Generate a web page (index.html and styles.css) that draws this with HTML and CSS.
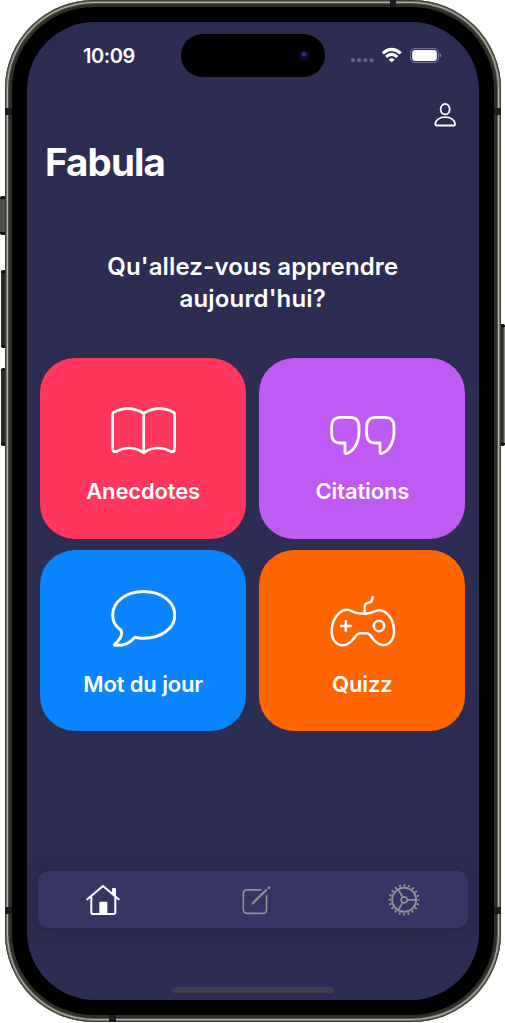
FILE: index.html
```html
<!DOCTYPE html>
<html lang="fr">
<head>
<meta charset="utf-8">
<title>Fabula</title>
<link rel="stylesheet" href="styles.css">
</head>
<body>
<div class="device">
  <i class="button action"></i><i class="button vol-up"></i><i class="button vol-down"></i><i class="button power"></i>
  <div class="frame">
  <i class="band b1"></i><i class="band b2"></i><i class="band b3"></i><i class="band b4"></i><i class="band b5"></i><i class="band b6"></i>
  <div class="bezel">
  <main class="screen">
    <header class="status">
      <span class="time">10:09</span>
      <span class="island"><i class="lens"></i></span>
      <svg class="indicators" viewBox="45 135 280 60">
        <g fill="#65638a"><circle cx="54" cy="181" r="6"/><circle cx="72.500" cy="181" r="6"/><circle cx="91" cy="181" r="6"/><circle cx="109.500" cy="181" r="6"/></g>
        <g fill="none" stroke="#fff" stroke-width="9"><path d="M143 160Q170 136 197 160"/><path d="M153 170.500Q170 156 187 170.500"/></g>
        <path d="M161 179Q170 171 179 179L170 187Z" fill="#fff"/>
        <rect x="226.500" y="145.500" width="84" height="42" rx="13" fill="none" stroke="#77759a" stroke-width="3"/>
        <rect x="231.500" y="150" width="74" height="33" rx="9" fill="#fff"/>
        <path d="M314 159Q319 161 319 166T314 173Z" fill="#77759a"/>
      </svg>
    </header>
    <div class="toolbar">
      <svg class="profile" viewBox="292 305 72 78" fill="none" stroke="#fff" stroke-width="5.500">
        <ellipse cx="328.500" cy="326.500" rx="13.500" ry="15.500"/>
        <path d="M304 375.500Q298 375.500 299 370C301 358 313 350.500 328.500 350.500S356 358 358 370Q359 375.500 353 375.500Z"/>
      </svg>
    </div>
    <h1 class="title">Fabula</h1>
    <h2 class="question"><span class="line">Qu'allez-vous apprendre</span><span class="line">aujourd'hui?</span></h2>
    <section class="grid">
      <article class="tile pink">
        <svg class="icon" viewBox="239 138 200 198" fill="none" stroke="#fff" stroke-width="8" stroke-linejoin="round">
          <path d="M340 190C310 171 276 172 250 187Q247 189 247 193V295Q247 309 260 304C284 290 316 290 340 309C364 290 396 290 420 304Q433 309 433 295V193Q433 189 430 187C404 172 370 171 340 190V309"/>
        </svg>
        <span class="label">Anecdotes</span>
      </article>
      <article class="tile purple">
        <svg class="icon" viewBox="236 138 200 198" fill="none" stroke="#fff" stroke-width="8.500" stroke-linejoin="round">
          <path id="quote" d="M284 279H271Q244 279 244 251V230Q244 202 271 202H299Q326 202 326 230V246C326 278 309 307 287 311Q284 311 284 307Z"/>
          <use href="#quote" x="105"/>
        </svg>
        <span class="label">Citations</span>
      </article>
      <article class="tile blue">
        <svg class="icon" viewBox="239 130 200 198" fill="none" stroke="#fff" stroke-width="9" stroke-linejoin="round">
          <path d="M340 140.500C289 140.500 247 170 247 212C247 232 257 247 272 257C277 269 270 284 253 299Q251 302 255 302C284 303 299 295 314 278C322 279 331 281 340 281C391 281 433.500 252 433.500 212C433.500 170 391 140.500 340 140.500Z"/>
        </svg>
        <span class="label">Mot du jour</span>
      </article>
      <article class="tile orange">
        <svg class="icon" viewBox="236 130 200 198" fill="none" stroke="#fff" stroke-width="7.500">
          <path d="M343 207C329 207 319 207 306 200C292 192 277 196 265 207C251 221 244 241 244 260C244 284 257 302 277 302C292 302 302 292 312 280C318 271 319 267 328 266H350C358 267 360 271 366 280C375 292 384 301 398 301C418 301 431 284 431 260C431 238 424 219 410 207C398 196 385 194 371 201C361 206 354 207 343 207V188Q343 175 355 174Q367 173 367 155"/>
          <path d="M269 244H304M286.500 227V261"/><circle cx="386" cy="244" r="15.500"/>
        </svg>
        <span class="label">Quizz</span>
      </article>
    </section>
    <nav class="tabs">
      <svg class="tab" viewBox="255 95 110 110">
        <path d="M262 147L309 107L356 147" fill="none" stroke="#fff" stroke-width="6" stroke-linecap="round" stroke-linejoin="round"/>
        <path d="M274 140V186Q274 191 279 191H341Q346 191 346 186V140" fill="none" stroke="#fff" stroke-width="6"/>
        <path d="M298 156Q298 154 300 154H320Q322 154 322 156V191H298ZM336 128V116Q336 113 339 113H345Q348 113 348 116V139Z" fill="#fff"/>
      </svg>
      <svg class="tab" viewBox="-43 95 110 110" fill="none" stroke="#908f94" stroke-width="5">
        <path d="M34 118.500H-9Q-21 118.500 -21 130V177Q-21 189 -9 189H37Q48.500 189 48.500 178V135"/>
        <path d="M3 164L7 154L47 115L52 120L12 159Z" fill="#908f94" stroke="none"/><circle cx="56" cy="112" r="4.500" fill="#908f94" stroke="none"/>
      </svg>
      <svg class="tab" viewBox="407 95 110 110" fill="none" stroke="#908f94">
        <circle cx="461.500" cy="148.500" r="36" stroke-width="6"/>
        <circle cx="461.500" cy="148.500" r="43" stroke-width="8" pathLength="80" stroke-dasharray="1.600 2.400" stroke-dashoffset=".8"/>
        <circle cx="461.500" cy="148.500" r="9" stroke-width="5"/>
        <path d="M471 148.500H497M457 140L443 117M457 157L443 180" stroke-width="5"/>
      </svg>
    </nav>
    <i class="home-bar"></i>
  </main>
  </div>
  </div>
</div>
</body>
</html>
```
FILE: styles.css
```css
* { box-sizing: border-box; }
body { margin: 0; background: #fff; font-family: Inter, "Liberation Sans", sans-serif; color: #fff; overflow: hidden; }
i { display: block; }
svg { display: block; flex: none; }

/* Phone shell */
.device { position: relative; width: 505px; height: 1023px; padding: 0 4px 1px 5px; }
.frame { position: relative; height: 1022px; padding: 7px; border-radius: 89px; background: #2f2e29;
  box-shadow: inset 0 0 0 1px #3c3b37, inset 0 0 0 2px #77746c, inset 0 0 0 3px #b5b1a5, inset 0 0 0 4px #55534b; }
.bezel { height: 1008px; padding: 15px; border-radius: 82px; background: #000; }
.screen { display: flex; flex-direction: column; height: 978px; margin-right: .5px; border-radius: 68px; background: #2d2c52; overflow: hidden; }
.button { position: absolute; background: #2a2d29; border: solid #0c0e0c; border-width: 3px 0; border-radius: 2px; }
.action { left: 0; top: 196px; width: 6px; height: 39px; background: #4c4e4b; }
.vol-up { left: 1px; top: 270px; width: 5px; height: 78px; }
.vol-down { left: 1px; top: 368px; width: 5px; height: 78px; }
.power { left: 500px; top: 324px; width: 5px; height: 122px; background: linear-gradient(90deg, #2a2d29 60%, #a7a7a3); }
.band { position: absolute; background: #1d1c1a; }
.b1, .b2, .b4, .b5 { width: 7px; height: 7px; }
.b1 { left: 0; top: 108px; }
.b2 { right: 0; top: 108px; }
.b3 { left: 385px; top: 0; width: 6px; height: 7px; }
.b4 { left: 0; top: 907px; }
.b5 { right: 0; top: 907px; }
.b6 { left: 104px; bottom: 0; width: 7px; height: 7px; }

/* Status bar */
.status { display: flex; height: 55px; padding: 12px 0 0 56px; flex: none; }
.time { width: 97.500px; padding-top: 9px; font-size: 20px; font-weight: 600; line-height: 26px; letter-spacing: -.4px; }
.island { display: flex; align-items: center; justify-content: flex-end; width: 144.500px; height: 43px; padding-right: 16px; border-radius: 22px; background: #000; }
.lens { width: 10px; height: 10px; border-radius: 50%; background: radial-gradient(circle at 50% 35%, #30309a 0 12%, #0b0b38 35%, #080818 75%); }
.indicators { width: 93.33px; height: 20px; margin: 11px 0 0 25px; }

.toolbar { display: flex; justify-content: flex-end; padding: 24.670px 22px 0 0; flex: none; }
.profile { width: 24px; height: 26px; }
.title { margin: 9px 0 0 18px; font-size: 38.500px; font-weight: 700; line-height: 50px; letter-spacing: -.9px; }
.question { display: flex; flex-direction: column; align-items: center; margin: 64px 0 0; font-size: 24px; font-weight: 600; line-height: 32px; letter-spacing: .14px; }
.line { white-space: nowrap; }

/* Category tiles */
.grid { display: grid; grid-template-columns: 205.700px 205.700px; grid-auto-rows: 181px; gap: 11.500px 13.500px; margin: 43.300px 0 0 13.300px; flex: none; }
.tile { display: flex; flex-direction: column; align-items: center; padding-top: 38px; border-radius: 35px; }
.pink { background: #ff375f; }
.purple { background: #bf5af2; }
.blue { background: #0a84ff; }
.orange { background: #ff6600; }
.icon { width: 66.670px; height: 66px; }
.label { margin-top: 16.500px; font-size: 22px; font-weight: 600; line-height: 26px; letter-spacing: -.13px; white-space: nowrap; }

/* Bottom navigation */
.tabs { display: flex; justify-content: space-between; align-items: center; width: 429.500px; height: 57px; margin: 140px 0 0 11px; padding: 0 44.500px 0 47px; border-radius: 11px; background: #373564; box-shadow: 0 1px 16px rgba(20, 20, 35, .38); flex: none; }
.tab { width: 36.670px; height: 36.670px; }
.home-bar { width: 162px; height: 6px; margin: 59px 0 0 145px; border-radius: 3px; background: #403e4c; flex: none; }
```
